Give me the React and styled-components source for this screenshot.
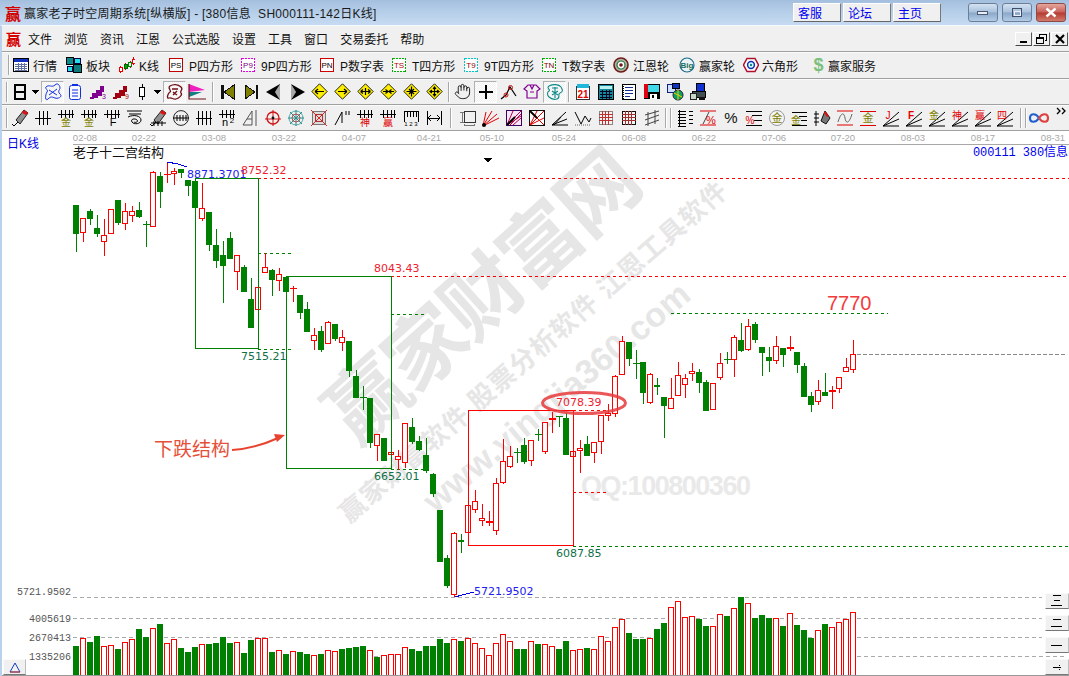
import React from 'react'
import styled, { createGlobalStyle } from 'styled-components'
import { Hand } from 'lucide-react'

const GlobalStyle = createGlobalStyle`
  html, body { margin: 0; padding: 0; background: #fff; }
  body { font-family: "Liberation Sans", "Noto Sans CJK SC", sans-serif; font-size: 12px; }
`

const CJK = '"Liberation Sans", "Noto Sans CJK SC", sans-serif'

const Window = styled.div`
  width: 1069px;
  height: 676px;
  display: flex;
  flex-direction: column;
  overflow: hidden;
  position: relative;
`

const TitleBar = styled.div`
  height: 25px;
  flex: none;
  display: flex;
  align-items: center;
  padding-left: 5px;
  background: linear-gradient(#a4bfde, #b8d0ea 55%, #c6dbf2);
  color: #1a1a1a;
`

const Logo = styled.span`
  font: bold ${p => p.$size || 16}px "Noto Sans CJK SC", sans-serif;
  color: #d40000;
  width: 15px;
  line-height: 16px;
  flex: none;
`

const TitleText = styled.span`
  margin-left: 4px;
  letter-spacing: 0.26px;
  white-space: pre;
`

const LinkGroup = styled.div`
  margin-left: auto;
  display: flex;
  gap: 2px;
  margin-right: 27px;
`

const LinkButton = styled.button`
  width: 48px;
  height: 19px;
  padding: 0 0 0 4px;
  text-align: left;
  background: #f0f0f0;
  color: #0000f0;
  font: 12px ${CJK};
  border: 1px solid;
  border-color: #fff #777 #666 #fff;
`

const WinButtons = styled.div`
  display: flex;
  gap: 4px;
  margin-right: 3px;
`

const WinButton = styled.div`
  width: 30px;
  height: 19px;
  box-sizing: border-box;
  border: 1px solid ${p => (p.$close ? '#8f4a46' : '#6d7f96')};
  border-radius: 3px;
  display: flex;
  align-items: center;
  justify-content: center;
  background: ${p => (p.$close
    ? 'linear-gradient(#e4a79d, #c8605a 48%, #b53a30 52%, #d17a6c)'
    : 'linear-gradient(#d3e2f2, #a9c1dc 48%, #8aa7c9 52%, #b4cce6)')};
`

const Body = styled.div`
  flex: 1;
  min-height: 0;
  display: flex;
  flex-direction: column;
  border-left: 2px solid #b9d1ea;
  border-top: 1px solid #f6fafe;
  background: #f0f0f0;
`

const MenuBar = styled.div`
  height: 26px;
  box-sizing: border-box;
  flex: none;
  display: flex;
  align-items: center;
  padding-left: 4px;
  border-bottom: 1px solid #a0a0a0;
`

const MenuItems = styled.div`
  display: flex;
  gap: 12px;
  margin-left: 7px;
  color: #111;
`

const MdiButtons = styled.div`
  margin-left: auto;
  display: flex;
  gap: 1px;
  margin-right: 1px;
`

const MdiButton = styled.div`
  width: 17px;
  height: 14px;
  box-sizing: border-box;
  background: #f0f0f0;
  border: 1px solid;
  border-color: #fff #555 #444 #fff;
  display: flex;
  align-items: center;
  justify-content: center;
`

const ToolRow = styled.div`
  height: ${p => p.$h || 26}px;
  box-sizing: border-box;
  flex: none;
  display: flex;
  align-items: center;
  border-bottom: 1px solid #a0a0a0;
  box-shadow: inset 0 1px 0 #fbfbfb;
  padding-left: ${p => p.$pad || 0}px;
  color: #111;
`

const Grip = styled.i`
  display: block;
  flex: none;
  width: 1px;
  height: 20px;
  margin: ${p => p.$m || '0 3px 0 3px'};
  background: #a8a8a8;
  border-right: 1px solid #fff;
`

const Named = styled.div`
  width: ${p => p.$w}px;
  flex: none;
  display: flex;
  align-items: center;
  gap: ${p => p.$gap || 4}px;
  white-space: nowrap;
`

const Slot = styled.span`
  width: ${p => p.$w || 23}px;
  height: 22px;
  flex: none;
  display: flex;
  align-items: ${p => (p.$top ? 'flex-start' : 'center')};
  justify-content: center;
  box-sizing: border-box;
  ${p => p.$on && `
    border: 1px solid;
    border-color: #b0b0b0 #fff #fff #b0b0b0;
    background: repeating-conic-gradient(#fff 0 25%, #f0f0f0 0 50%) 0 0 / 2px 2px;
  `}
`

const Pic = styled.svg`
  display: block;
  flex: none;
`

const ChartPanel = styled.div`
  flex: 1;
  min-height: 0;
  background: #fff;
  position: relative;
`

const ChartSvg = styled.svg`
  display: block;
  overflow: visible;
  shape-rendering: crispEdges;
  width: 1067px;
  height: 545px;
`

const SideButton = styled.div`
  position: absolute;
  left: ${p => p.$x - 2}px;
  top: ${p => p.$y - 131}px;
  width: ${p => p.$w || 23}px;
  height: 16px;
  box-sizing: border-box;
  background: #f0f0f0;
  border: 1px solid;
  border-color: #fafafa #bdbdbd #777 #fafafa;
  display: flex;
  align-items: center;
  justify-content: center;
`

const Stroke = ({ d, c = '#000', w = 1, f = 'none' }) => <path d={d} stroke={c} strokeWidth={w} fill={f} />
const Cap = ({ x, y, s = 8, c = '#000', b, children }) => (
  <text x={x} y={y} fontSize={s} fill={c} fontWeight={b ? 'bold' : 'normal'} textAnchor="middle" fontFamily={'"Liberation Sans", "Noto Sans CJK SC", sans-serif'}>{children}</text>
)
const Ico = ({ w = 18, h = 18, crisp = true, children }) => (
  <Pic width={w} height={h} viewBox={`0 0 ${w} ${h}`} shapeRendering={crisp ? 'crispEdges' : 'geometricPrecision'}>{children}</Pic>
)

const Tag = ({ border, dash, text, fg = '#000' }) => (
  <Ico w={14} h={14}>
    <rect x=".5" y=".5" width="13" height="13" fill="#fff" stroke={border} strokeDasharray={dash} />
    <Cap x={7} y={10} s={8} c={fg}>{text}</Cap>
  </Ico>
)

const row1 = [
  { w: 53, label: '行情', icon: (
    <Ico w={16} h={15}>
      <rect x=".5" y=".5" width="15" height="13" fill="#fff" stroke="#000" />
      <rect x="1" y="1" width="14" height="3" fill="#1030c0" />
      <Stroke d="M2 6H14M2 8H14M2 10H14M2 12H14M5 5V13M8 5V13M11 5V13" c="#6070a0" />
      <Stroke d="M1 15H16" c="#888" />
    </Ico>
  ) },
  { w: 52, label: '板块', icon: (
    <Ico w={16} h={16}>
      <rect x=".5" y=".5" width="7" height="7" fill="#0a8a8a" stroke="#000" />
      <rect x="8.5" y="1.5" width="6" height="5" fill="#20e0e8" stroke="#004" />
      <rect x="1.5" y="9.5" width="5" height="5" fill="#20e0e8" stroke="#004" />
      <rect x="7.5" y="7.5" width="8" height="8" fill="#0a7a7a" stroke="#000" />
    </Ico>
  ) },
  { w: 51, label: 'K线', icon: (
    <Ico w={17} h={16}>
      <Stroke d="M2.5 9V16M7.5 6V13M12.5 4V11M15.5 0V8" c="#d00" />
      <rect x="1" y="10" width="3" height="4" fill="#fff" stroke="#e00" />
      <rect x="6" y="7" width="3" height="4" fill="#0a0" stroke="#060" />
      <rect x="10" y="5" width="3" height="4" fill="#fff" stroke="#080" />
      <rect x="14" y="2" width="3" height="4" fill="#fff" stroke="#e00" />
    </Ico>
  ) },
  { w: 72, label: 'P四方形', gap: 6, icon: <Tag border="#c00000" text="PS" /> },
  { w: 79, label: '9P四方形', gap: 6, icon: <Tag border="#e000e0" dash="2 1" text="P9" fg="#800080" /> },
  { w: 72, label: 'P数字表', gap: 6, icon: <Tag border="#d00000" text="PN" /> },
  { w: 72, label: 'T四方形', gap: 6, icon: <Tag border="#00b000" dash="2 1" text="TS" fg="#b00000" /> },
  { w: 78, label: '9T四方形', gap: 6, icon: <Tag border="#00c8c8" dash="2 1" text="T9" fg="#a00000" /> },
  { w: 71, label: 'T数字表', gap: 6, icon: <Tag border="#00b000" dash="2 1" text="TN" fg="#800000" /> },
  { w: 66, label: '江恩轮', gap: 4, icon: (
    <Ico w={16} h={16} crisp={false}>
      <circle cx="8" cy="8" r="7" fill="#a8b8a0" stroke="#701818" strokeWidth="1.6" />
      <circle cx="8" cy="8" r="4" fill="#fff" stroke="#2a7040" strokeWidth="1.2" />
      <circle cx="8" cy="8" r="1.8" fill="#701818" />
    </Ico>
  ) },
  { w: 64, label: '赢家轮', gap: 4, icon: (
    <Ico w={16} h={16} crisp={false}>
      <circle cx="8" cy="8" r="7" fill="#eaf4f8" stroke="#1a6a8a" strokeWidth="1.2" />
      <Cap x={8} y={11} s={8} c="#1a6a5a" b>Big</Cap>
    </Ico>
  ) },
  { w: 69, label: '六角形', gap: 3, icon: (
    <Ico w={16} h={16} crisp={false}>
      <polygon points="4,1.5 12,1.5 15.5,8 12,14.5 4,14.5 .5,8" fill="#fff" stroke="#b01030" strokeWidth="1.5" />
      <circle cx="8" cy="8" r="3.4" fill="#dff" stroke="#1030b0" strokeWidth="1.5" />
      <circle cx="8" cy="8" r="1.2" fill="#188" />
    </Ico>
  ) },
  { w: 70, label: '赢家服务', gap: 3, icon: (
    <Ico w={13} h={18} crisp={false}>
      <Cap x={6.5} y={15} s={18} c="#7cc07c" b>$</Cap>
    </Ico>
  ) },
]

const stepLine = (c, n) => (
  <Ico>
    <Stroke d="M1 15H4V11H6V14H8V8H10V12H12V4H14V9" c={c} w="1.4" />
    <Cap x={15} y={16} s={7} c={c}>{n}</Cap>
  </Ico>
)

const diamond = glyph => (
  <Ico w={17} h={17} crisp={false}>
    <polygon points="8.5,.8 16.2,8.5 8.5,16.2 .8,8.5" fill="#ffee00" stroke="#222" strokeWidth="1" />
    <Stroke d={glyph} w="1.2" />
  </Ico>
)

const tri = (points, fill) => <polygon points={points} fill={fill} stroke="#111" />

const row2a = [
  { w: 20, icon: <Ico><Stroke d="M4 2H14V16H4ZM4 9H14" w="2" /></Ico> },
  { w: 11, icon: <Ico w={7} h={4}><polygon points="0,0 7,0 3.5,4" fill="#000" /></Ico> },
  { on: true, icon: <Ico crisp={false}><Stroke d="M2 4C5 1 8 5 11 2S16 3 16 5 13 8 16 11 14 16 11 15 7 13 4 16 1 12 3 9 0 6 2 4ZM5 7L13 12M13 6L5 12" c="#1030e0" /></Ico> },
  { w: 22, icon: <Ico crisp={false}><rect x="3.5" y="2.5" width="11" height="14" rx="2" fill="#f8f8ff" stroke="#1030e0" /><Stroke d="M6 1.5H12M6 7H12M6 10H12M6 13H12" c="#1030e0" /></Ico> },
  { icon: stepLine('#800090', '3') },
  { icon: stepLine('#a00010', '9') },
  { w: 20, icon: <Ico><Stroke d="M9 1V17" /><rect x="6.5" y="4.5" width="5" height="9" fill="#fff" stroke="#000" strokeWidth="1.4" /></Ico> },
  { w: 11, icon: <Ico w={7} h={4}><polygon points="0,0 7,0 3.5,4" fill="#000" /></Ico> },
  { on: true, icon: <Ico crisp={false}><Stroke d="M4 3C7 1 12 1 15 4S13 8 15 10 13 15 10 16 6 14 3 15 2 10 4 9 1 5 4 3ZM6 6L12 6M7 9L11 12M11 8L7 12" c="#701018" w="1.3" /></Ico> },
  { icon: <Ico w={19} h={18} crisp={false}><polygon points="1,1 17,7 1,9" fill="#f020c0" /><polygon points="1,9 14,9 1,14" fill="#108080" /><Stroke d="M1 1V16H18" c="#701018" w="1.2" /></Ico> },
]

const row2b = [
  { icon: <Ico><rect x="2" y="2" width="2.5" height="14" fill="#111" />{tri('15,2 5,9 15,16', '#808000')}</Ico> },
  { icon: <Ico>{tri('3,2 13,9 3,16', '#808000')}<rect x="13.5" y="2" width="2.5" height="14" fill="#111" /></Ico> },
  { icon: <Ico crisp={false}><polygon points="15,1 1,9 15,9" fill="#000" /><polygon points="15,1 15,17 10,9" fill="#a8a8a8" /><polygon points="15,17 1,9 10,9" fill="#000" /></Ico> },
  { icon: <Ico crisp={false}><polygon points="3,1 3,17 8,9" fill="#a8a8a8" /><polygon points="3,1 17,9 8,9" fill="#000" /><polygon points="3,17 17,9 8,9" fill="#000" /></Ico> },
  { icon: diamond('M4 8.5H13M4 8.5L7 6M4 8.5L7 11') },
  { icon: diamond('M4 8.5H13M13 8.5L10 6M13 8.5L10 11') },
  { icon: diamond('M3.5 8.5H13.5M3.5 8.5L6 6.5M3.5 8.5L6 10.5M13.5 8.5L11 6.5M13.5 8.5L11 10.5M8.5 5V12') },
  { icon: diamond('M3 8.5H14M8 8.5L5.5 6.5M8 8.5L5.5 10.5M9 8.5L11.5 6.5M9 8.5L11.5 10.5') },
  { icon: diamond('M3.5 8.5H13.5M8.5 3.5V13.5M6 6L11 11M11 6L6 11') },
  { icon: diamond('M3.5 8.5H13.5M8.5 3.5V13.5M6 7L4 8.5L6 10M11 7L13 8.5L11 10M7 6L8.5 4L10 6M7 11L8.5 13L10 11') },
]

const row2c = [
  { icon: <Hand size={17} strokeWidth={1.3} color="#111" /> },
  { on: true, icon: <Ico><Stroke d="M9 2V16M2 9H16" w="1.2" /></Ico> },
  { icon: <Ico crisp={false}><Stroke d="M1 16L6 12L10 4L16 13" w="1.2" /><circle cx="6" cy="12" r="2" fill="none" stroke="#d01010" /><circle cx="10.5" cy="4.5" r="2" fill="none" stroke="#d01010" /></Ico> },
  { icon: <Ico crisp={false}><Stroke d="M5 2H13L17 6L14 8V15H4V8L1 6ZM7 2L9 6L11 2M7 9H11" c="#800090" w="1.2" /></Ico> },
  { on: true, icon: <Ico w={20} crisp={false}><Stroke d="M4 3C8 1 14 1 16 4S18 9 15 10 16 15 12 16 6 16 4 14 2 9 4 8 1 5 4 3ZM7 5H13M7 8L13 12M13 8L7 12M10 4V15" c="#0a8888" w="1.1" /></Ico> },
]

const row2d = [
  { icon: <Ico><rect x="2.5" y="3.5" width="13" height="13" fill="#fff" stroke="#333" /><rect x="3" y="1" width="12" height="4" fill="#20b8d8" /><Cap x={9} y={15} s={10} c="#e00000" b>21</Cap></Ico> },
  { icon: <Ico><rect x="1.5" y="1.5" width="15" height="15" fill="#108a9a" stroke="#000" /><rect x="3" y="3" width="12" height="3" fill="#b8f0f0" /><Stroke d="M3 8.5H15M3 11.5H15M3 14.5H15M5.5 7V16M9 7V16M12.5 7V16" c="#002" /></Ico> },
  { icon: <Ico><rect x="2.5" y="1.5" width="13" height="15" fill="#fff" stroke="#000" /><Stroke d="M5 4H13M5 7H13M5 10H13M5 13H10" c="#183090" /><path d="M3 1V17" stroke="#000" strokeWidth="2" strokeDasharray="1 1" /></Ico> },
  { icon: <Ico><rect x="1" y="1" width="16" height="15" fill="#000" /><rect x="1" y="1" width="4" height="14" fill="#e00010" /><rect x="5" y="2" width="11" height="7" fill="#40d8e8" /><rect x="7" y="11" width="7" height="5" fill="#fff" /><rect x="9" y="12" width="2" height="3" fill="#000" /></Ico> },
  { icon: <Ico crisp={false}><rect x="1.5" y="1.5" width="8" height="8" fill="#d0e0ff" stroke="#102080" /><rect x="6.5" y="0.5" width="7" height="5" fill="#1030c0" stroke="#000" /><circle cx="12" cy="12" r="5" fill="#10a060" stroke="#223" /><Stroke d="M8 10L16 14M12 7V17" c="#f0d000" /></Ico> },
  { icon: <Ico><rect x="7.5" y=".5" width="8" height="8" fill="#1030d0" stroke="#000" /><rect x="3" y="8" width="13" height="6" fill="#405050" stroke="#000" /><rect x="1.5" y="10.5" width="6" height="6" fill="#c8d8c8" stroke="#222" /><rect x="10" y="14" width="6" height="3" fill="#111" /></Ico> },
]

const comb = (c = '#000') => <Stroke d="M1 5H17M4 1V9M8 1V9M12 1V9M15 1V9" c={c} />
const Comb = (c, glyph, gc) => <Ico>{comb(c)}<Cap x={9} y={17} s={10} c={gc || c}>{glyph}</Cap></Ico>
const fan = (glyph, gc, b) => (
  <Ico crisp={false}>
    <Stroke d="M1 17H17M1 17L17 10M1 17L17 3" w="1" />
    <Cap x={6} y={10} s={10} c={gc} b={b}>{glyph}</Cap>
  </Ico>
)
const pencil = (
  <>
    <polygon points="13,1 17,4 9,15 5,11" fill="#909090" stroke="#222" />
    <polygon points="13,1 17,4 15,6 11,4" fill="#e01010" />
    <Stroke d="M7 13L3 17M3 17L1 15" w="1" />
  </>
)
const grid = (c, ol) => (
  <Ico>
    <rect x="2.5" y="2.5" width="13" height="13" fill="#f4f4f4" stroke={ol} />
    <Stroke d="M5.5 2V16M8.5 2V16M11.5 2V16M2 5.5H16M2 8.5H16M2 11.5H16" c={c} />
  </Ico>
)

const row3a = [
  <Ico crisp={false}>{pencil}</Ico>,
  <Ico><Stroke d="M1 9H17M5 2V16M9 2V16M13 2V16" /></Ico>,
  Comb('#000', '金', '#808000'),
  Comb('#000', '金', '#808000'),
  <Ico>{comb()}<Cap x={10} y={17} s={11}>F</Cap></Ico>,
  <Ico crisp={false}><Stroke d="M1 2H16M3 5H15M2 8C8 5 15 7 15 11S8 16 6 13 9 9 11 11 9 14 8 13" /></Ico>,
  <Ico crisp={false}>{pencil}<Stroke d="M2 14H17M5 12V17M9 12V17M13 12V17" /></Ico>,
  <Ico crisp={false}><circle cx="9" cy="9" r="7.4" fill="none" stroke="#222" /><Stroke d="M1 9H17M5 6V12M8 6V12M11 6V12M14 6V12" /></Ico>,
  <Ico><Stroke d="M1 9H17M3 2V16M7 2V16M11 2V16M15 2V16" /></Ico>,
  <Ico>{comb()}<Cap x={7} y={17} s={11}>n</Cap><Cap x={14} y={14} s={8}>2</Cap></Ico>,
  <Ico crisp={false}><Stroke d="M2 16L11 2V16ZM6 10L11 10M15 1V17" c="#555" /></Ico>,
  <Ico crisp={false}><circle cx="9" cy="9" r="6" fill="none" stroke="#d01010" strokeWidth="1.3" /><Stroke d="M9 1V17M1 10H17" c="#d01010" /><circle cx="9" cy="9" r="1.4" fill="#111" /></Ico>,
  <Ico crisp={false}><circle cx="9" cy="9" r="7" fill="none" stroke="#4aa" /><circle cx="9" cy="9" r="4" fill="none" stroke="#c44" /><Stroke d="M1 9H17M9 1V17M3 3L15 15M15 3L3 15" c="#388" /></Ico>,
  <Ico crisp={false}><rect x="2.5" y="2.5" width="13" height="13" fill="#ddd" stroke="#777" /><rect x="5.5" y="5.5" width="7" height="7" fill="none" stroke="#a33" /><Stroke d="M1 1L17 17M17 1L1 17" c="#d22" /></Ico>,
  <Ico crisp={false}><Stroke d="M2 16L9 3M9 14V3M13 6V2M16 6V2" /></Ico>,
  Comb('#000', '神', '#e00000'),
  Comb('#000', '赢', '#e00000'),
  <Ico><Stroke d="M2 2H16V13M2 2V13M5 2V8M8 2V8M11 2V8M14 2V8" /><Cap x={9} y={17} s={6}>1 2 3</Cap></Ico>,
  <Ico><Stroke d="M2 2V16M16 2V16M3 9H15M3 9L6 6M3 9L6 12M15 9L12 6M15 9L12 12" /></Ico>,
]

const row3b = [
  <Ico><rect x="5.5" y="2.5" width="11" height="11" fill="none" stroke="#333" /><Stroke d="M1 3H5M1 13H5M3 3V13M5 15V17M15 15V17M5 16H15" c="#777" /></Ico>,
  <Ico crisp={false}><Stroke d="M1 17L17 9M1 17L15 5M1 17L10 2M1 17L4 3" c="#e00000" /><circle cx="2" cy="16" r="2" fill="#000" /></Ico>,
  <Ico crisp={false}><rect x="1.5" y="1.5" width="15" height="15" fill="#f4e8f8" stroke="#400060" /><Stroke d="M2 16L16 7M2 16L16 2M2 16L8 2M5 16L16 5M8 16L16 9" c="#c00040" /><Stroke d="M2 16L10 8" c="#000" w="2" /></Ico>,
  <Ico crisp={false}><rect x="1.5" y="1.5" width="15" height="15" fill="#fff" stroke="#111" /><Stroke d="M2 16L16 2M2 2L16 16M9 2L2 16M16 9L2 16" c="#e00000" /><Stroke d="M2 2L9 9" c="#000" w="2" /></Ico>,
  <Ico crisp={false}><Stroke d="M1 16H17M1 16L16 10M1 16L15 3M3 16L10 8" /></Ico>,
  <Ico crisp={false}><Stroke d="M1 3L7 15L11 7L15 13L17 9" /><path d="M1 16H17" stroke="#666" strokeDasharray="1 1" /></Ico>,
  grid('#c03030', '#888'),
  grid('#a03030', '#111'),
  <Ico crisp={false}><Stroke d="M2 6L16 2M2 11L16 6M2 16L16 11M5 17V3M12 15V1" c="#444" /></Ico>,
]

const row3c = [
  <Ico><Stroke d="M2 2H10M2 5H10M2 8H10M2 11H10M2 14H10M2 17H10M3 1V17" /><Stroke d="M13 2H17M13 6H17M13 10H17M13 14H17" /></Ico>,
  <Ico crisp={false}><Stroke d="M1 2H17M1 16H17" c="#e00000" /><Stroke d="M4 15L10 3" c="#444" /><Cap x={12} y={15} s={11} c="#e00000">%</Cap></Ico>,
  <Ico><Cap x={9} y={14} s={15} c="#111">%</Cap></Ico>,
  <Ico><Stroke d="M1 2H17M7 6H17M9 11H17M1 16H17" /><Cap x={5} y={15} s={10} c="#e00000">%</Cap></Ico>,
  <Ico crisp={false}><circle cx="9" cy="9" r="7.5" fill="#f4f4f4" stroke="#999" /><Cap x={9} y={13} s={11} c="#808000">金</Cap></Ico>,
  <Ico><Stroke d="M2 3H17M9 7H17M11 11H17M2 16H17" /><Cap x={6} y={15} s={10} c="#808000">金</Cap></Ico>,
  <Ico crisp={false}><Stroke d="M3 2V17M1 5H6M1 9H6M1 13H6" /><polygon points="12,2 17,9 13,15 8,12" fill="#777" stroke="#111" /><polygon points="12,2 16,7 14,8 11,4" fill="#e01010" /></Ico>,
  <Ico crisp={false}><Stroke d="M1 2H17M1 16H17" c="#e00000" /><Stroke d="M2 13C5 3 8 3 9 9S13 15 16 5" c="#666" /></Ico>,
  <Ico><Stroke d="M1 2H17M1 16H17" c="#e00000" /><Cap x={9} y={13} s={11} c="#808000">金</Cap></Ico>,
  fan('J', '#e00000'),
  fan('F', '#e00000', true),
  fan('金', '#808000'),
  fan('神', '#e00000'),
  fan('赢', '#e00000'),
  fan('四', '#e00000'),
]

const Tools = ({ items }) => items.map((it, i) => (
  <Slot key={i} $w={it.w} $on={it.on}>{it.icon}</Slot>
))
const ToolsPlain = ({ items, w = 23 }) => items.map((el, i) => (
  <Slot key={i} $w={w}>{el}</Slot>
))

// [colour, body top, body bottom, high, low] from x=76, one every 7px
const candles = [
  ['g', 205, 234, 205, 252], ['r', 218, 232, 218, 242], ['g', 211, 219, 209, 225], ['g', 228, 234, 215, 237],
  ['r', 235, 241, 219, 256], ['r', 209, 233, 209, 233], ['g', 200, 223, 200, 225], ['r', 211, 223, 203, 230],
  ['r', 211, 215, 206, 222], ['g', 210, 217, 202, 218], ['g', 224, 224, 221, 247], ['r', 172, 226, 171, 227],
  ['g', 176, 192, 172, 208], ['r', 174, 174, 162, 183], ['r', 171, 173, 168, 185], ['g', 169, 173, 169, 178],
  ['g', 180, 186, 180, 196], ['g', 181, 208, 181, 208], ['r', 208, 218, 183, 221], ['g', 212, 245, 212, 251],
  ['g', 245, 261, 229, 268], ['g', 255, 266, 241, 303], ['g', 238, 259, 232, 259], ['r', 255, 271, 255, 290],
  ['g', 267, 292, 265, 292], ['g', 299, 328, 278, 328], ['r', 287, 309, 287, 348], ['r', 267, 272, 253, 273],
  ['g', 270, 280, 269, 296], ['r', 274, 280, 268, 291], ['g', 277, 292, 276, 292], ['r', 288, 288, 286, 302],
  ['g', 295, 313, 295, 319], ['g', 309, 332, 302, 332], ['r', 335, 340, 328, 350], ['g', 331, 350, 326, 352],
  ['r', 322, 343, 321, 344], ['g', 324, 339, 324, 341], ['r', 337, 342, 330, 351], ['g', 341, 371, 341, 377],
  ['g', 376, 398, 370, 398], ['g', 397, 397, 386, 410], ['g', 398, 443, 398, 448], ['r', 434, 445, 434, 461],
  ['g', 438, 461, 438, 461], ['r', 452, 454, 443, 468], ['r', 456, 459, 450, 470], ['r', 423, 462, 423, 468],
  ['g', 427, 442, 418, 444], ['g', 441, 450, 436, 451], ['g', 455, 471, 438, 473], ['g', 474, 494, 473, 497],
  ['g', 510, 562, 510, 562], ['g', 558, 586, 555, 588], ['r', 533, 594, 532, 597], ['g', 540, 542, 534, 553],
  ['r', 505, 532, 505, 532], ['r', 501, 509, 490, 513], ['r', 518, 520, 504, 526], ['r', 521, 522, 511, 526],
  ['r', 483, 530, 478, 535], ['r', 461, 482, 439, 484], ['r', 456, 466, 446, 468], ['g', 452, 452, 448, 463],
  ['g', 445, 462, 438, 464], ['r', 440, 460, 440, 466], ['g', 434, 434, 429, 441], ['r', 422, 451, 422, 454],
  ['r', 418, 419, 412, 433], ['g', 416, 416, 416, 427], ['g', 418, 455, 413, 455], ['r', 451, 456, 451, 456],
  ['r', 448, 450, 440, 473], ['g', 444, 456, 436, 456], ['r', 442, 452, 442, 463], ['r', 415, 441, 415, 454],
  ['r', 413, 415, 404, 421], ['r', 376, 413, 375, 417], ['r', 341, 374, 336, 375], ['g', 342, 359, 342, 366],
  ['g', 363, 363, 350, 379], ['g', 362, 393, 362, 404], ['r', 374, 402, 373, 404], ['g', 385, 387, 378, 395],
  ['g', 397, 406, 397, 438], ['r', 398, 408, 378, 409], ['r', 375, 395, 362, 395], ['r', 378, 384, 374, 398],
  ['r', 371, 373, 363, 381], ['g', 372, 383, 369, 393], ['g', 382, 411, 380, 411], ['r', 383, 409, 383, 409],
  ['r', 363, 377, 353, 380], ['g', 359, 359, 352, 364], ['r', 337, 359, 335, 377], ['g', 340, 351, 323, 352],
  ['r', 326, 349, 319, 351], ['g', 324, 340, 322, 343], ['g', 347, 353, 347, 376], ['g', 357, 361, 347, 372],
  ['r', 346, 360, 336, 364], ['g', 348, 355, 348, 367], ['r', 347, 348, 336, 351], ['g', 352, 365, 352, 373],
  ['g', 366, 397, 363, 397], ['g', 396, 405, 392, 412], ['r', 390, 401, 380, 405], ['g', 392, 396, 373, 396],
  ['r', 390, 391, 386, 409], ['r', 377, 388, 377, 393], ['r', 367, 371, 358, 372], ['r', 354, 369, 340, 373],
]

// top of each volume bar, same x as the candles. negative = green
const volumes = [
  -646, 638, -642, -636, 646, 645, -649, 642, 639, -629, -637, 628, -624, 643, 639, -648,
  -652, -647, 644, -644, -643, -637, -643, 642, -653, -640, 638, 638, -652, 650, -654, 651,
  -652, -654, 655, -654, 650, 651, -649, -648, -647, -646, 650, -657, 655, 654, 654,
  647, -649, -651, -646, -646, -639, -643, 639, -641, 638, 643, 648, 655, 643, 634, 641,
  -649, -649, 641, -644, 644, 646, -649, -641, 650, 649, -648, 649, 636, 641, 627, 619,
  -633, -639, -639, 638, -629, -623, 607, 601, 617, 616, -619, -626, 626, 614, -616, 608,
  -597, 603, -618, -615, -618, 618, -626, 613, -625, -630, -638, 630, -624, 627, 622, 619, 612,
]

const GREEN = '#008000'
const RED = '#ff0000'

const Candle = ({ x, data }) => {
  const [k, top, bot, hi, lo] = data
  const col = k === 'g' ? GREEN : RED
  const h = bot - top
  return (
    <g>
      <rect x={x} y={hi} width="1" height={lo - hi} fill={col} />
      {h <= 1 ? (
        <rect x={x - 3} y={top} width="7" height={h + 1} fill={col} />
      ) : k === 'g' ? (
        <rect x={x - 3} y={top} width="6" height={h} fill={col} />
      ) : (
        <rect x={x - 2.5} y={top + 0.5} width="5" height={h} fill="#fff" stroke={col} />
      )}
    </g>
  )
}

const VolBar = ({ x, top }) => {
  const y = Math.abs(top)
  return top < 0
    ? <rect x={x - 3} y={y} width="6" height={675 - y} fill={GREEN} />
    : <rect x={x - 2.5} y={y + 0.5} width="5" height={675 - y} fill="#fff" stroke={RED} />
}

const Dash = ({ y, x1, x2, c, d = '3 3' }) => (
  <line x1={x1} x2={x2} y1={y + 0.5} y2={y + 0.5} stroke={c} strokeDasharray={d} />
)

const Box = ({ x, y, w, h, c }) => <rect x={x + 0.5} y={y + 0.5} width={w} height={h} fill="none" stroke={c} />

const dates = [
  ['02-08', 85], ['02-22', 144], ['03-08', 214], ['03-22', 284], ['04-07', 354], ['04-21', 429], ['05-10', 492],
  ['05-24', 564], ['06-08', 634], ['06-22', 704], ['07-06', 774], ['07-20', 843], ['08-03', 913], ['08-17', 983], ['08-31', 1053],
]

const Price = ({ x, y, c, children }) => (
  <text x={x} y={y + 4} fontSize="11" fill={c} fontFamily='"DejaVu Sans", sans-serif'>{children}</text>
)

const Axis = ({ y, children }) => (
  <text x="71" y={y + 3.5} textAnchor="end" fontSize="10" fill="#555" fontFamily='"Liberation Mono", monospace'>{children}</text>
)

const Mark = ({ x, y, s = 78, w, len, rot = -42, children, c = '#e6e6e6' }) => (
  <text
    x={x} y={y} transform={`rotate(${rot} ${x} ${y})`} textAnchor="middle" fontSize={s} fontWeight={w || 'bold'} fill={c}
    fontFamily={'"Liberation Sans", "Noto Sans CJK SC", sans-serif'} textLength={len} lengthAdjust="spacing"
  >{children}</text>
)

const Chart = () => (
  <ChartSvg viewBox="2 131 1067 545">
    <Mark x={502} y={317} s={80} len={390}>赢家财富网</Mark>
    <Mark x={539} y={359} s={26} len={503} rot={-41}>赢家财富软件 股票分析软件 江恩工具软件</Mark>
    <Mark x={564} y={406} s={34} len={336} rot={-40}>www.yingjia360.com</Mark>
    <text x="581" y="495" fontSize="27" fontWeight="bold" fill="#e9e9e9" fontFamily='"Liberation Sans", sans-serif' textLength="170">QQ:100800360</text>

    {dates.map(([t, x]) => (
      <text key={t} x={x} y="141" textAnchor="middle" fontSize="9.5" fill="#a8a8a8" fontFamily='"Liberation Sans", sans-serif'>{t}</text>
    ))}
    <rect x="73" y="144" width="996" height="1" fill="#a8a8a8" />
    <text x="7" y="148" fontSize="12" fill="#0000e0" fontFamily={CJK}>日K线</text>
    <text x="73" y="157" fontSize="13" fill="#111" fontFamily={CJK}>老子十二宫结构</text>
    <text x="973" y="156" fontSize="12" fill="#0000f0" fontFamily={'"Liberation Mono", "Noto Sans CJK SC", monospace'} textLength="95">000111 380信息</text>
    <polygon points="484,158 492,158 488,163" fill="#000" />

    {[597, 618, 637, 656].map((y, i) => (
      <Dash key={y} y={y} x1={73} x2={i === 3 ? 1066 : 1042} c="#aaa" d="4 3" />
    ))}
    <Dash y={354} x1={857} x2={1066} c="#888" d="4 2" />
    <Axis y={591}>5721.9502</Axis>
    <Axis y={618}>4005619</Axis>
    <Axis y={637}>2670413</Axis>
    <Axis y={656}>1335206</Axis>

    <Dash y={178} x1={258} x2={1069} c={RED} />
    <Dash y={276} x1={391} x2={1069} c={RED} />
    <Dash y={253} x1={258} x2={292} c={GREEN} />
    <Dash y={349} x1={258} x2={292} c={GREEN} />
    <Dash y={314} x1={391} x2={425} c={GREEN} />
    <Dash y={469} x1={391} x2={425} c={GREEN} />
    <Dash y={313} x1={671} x2={888} c={GREEN} />
    <Dash y={546} x1={573} x2={1069} c={GREEN} />
    <Dash y={410} x1={573} x2={607} c={RED} />
    <Dash y={492} x1={573} x2={607} c={RED} />

    {candles.map((c, i) => <Candle key={i} x={76 + i * 7} data={c} />)}
    {volumes.map((t, i) => <VolBar key={i} x={76 + i * 7} top={t} />)}
    <rect x="2" y="675" width="1067" height="1" fill="#999" />

    <Box x={195} y={178} w={63} h={170} c={GREEN} />
    <Box x={286} y={276} w={105} h={192} c={GREEN} />
    <Box x={468} y={410} w={105} h={135} c={RED} />

    <polyline points="167,162 178,164 187,167" fill="none" stroke="#0000e0" />
    <polyline points="455,597 462,595 474,592" fill="none" stroke="#0000e0" />
    <Price x={187} y={174} c="#2020f0">8871.3701</Price>
    <Price x={241} y={170} c="#f02030">8752.32</Price>
    <Price x={241} y={356} c="#107048">7515.21</Price>
    <Price x={374} y={268} c="#f02030">8043.43</Price>
    <Price x={374} y={476} c="#107048">6652.01</Price>
    <Price x={556} y={402} c="#f02030">7078.39</Price>
    <Price x={556} y={553} c="#107048">6087.85</Price>
    <Price x={474} y={591} c="#2020f0">5721.9502</Price>

    <ellipse cx="584" cy="403" rx="41.5" ry="10.5" fill="none" stroke="#e8383c" strokeWidth="3" opacity=".85" shapeRendering="geometricPrecision" />

    <text x="827" y="310" fontSize="20" fill="#f23c3c" fontFamily='"Liberation Sans", sans-serif'>7770</text>
    <text x="154" y="456" fontSize="19" fill="#e5503a" fontFamily={CJK}>下跌结构</text>
    <g shapeRendering="geometricPrecision">
      <path d="M232 450C250 449 265 444 278 438" fill="none" stroke="#e8432f" strokeWidth="2" />
      <polygon points="285,435 274,434 277,442" fill="#e8432f" />
    </g>
  </ChartSvg>
)

const lines = (...rows) => (
  <Ico w={16} h={12}>
    {rows.map(([x, y, w], i) => <rect key={i} x={x} y={y} width={w} height="1" fill="#000" />)}
  </Ico>
)

export default function App() {
  return (
    <>
      <GlobalStyle />
      <Window>
        <TitleBar>
          <Logo>赢</Logo>
          <TitleText>赢家老子时空周期系统[纵横版] - [380信息  SH000111-142日K线]</TitleText>
          <LinkGroup>
            <LinkButton>客服</LinkButton>
            <LinkButton>论坛</LinkButton>
            <LinkButton>主页</LinkButton>
          </LinkGroup>
          <WinButtons>
            <WinButton>
              <Ico w={12} h={6}><rect x=".5" y="1.5" width="10" height="3" fill="#e8eef6" stroke="#4a5a70" /></Ico>
            </WinButton>
            <WinButton>
              <Ico w={12} h={10}><rect x="1.5" y=".5" width="9" height="8" fill="none" stroke="#3f4f66" /><rect x="3" y="3" width="6" height="4" fill="none" stroke="#eef" /></Ico>
            </WinButton>
            <WinButton $close>
              <Ico w={14} h={11} crisp={false}><Stroke d="M2.5 1.5L11.5 9.5M11.5 1.5L2.5 9.5" c="#fff" w="2.4" /></Ico>
            </WinButton>
          </WinButtons>
        </TitleBar>
        <Body>
          <MenuBar>
            <Logo $size={15}>赢</Logo>
            <MenuItems>
              {['文件', '浏览', '资讯', '江恩', '公式选股', '设置', '工具', '窗口', '交易委托', '帮助'].map(m => (
                <span key={m}>{m}</span>
              ))}
            </MenuItems>
            <MdiButtons>
              <MdiButton><Ico w={9} h={9}><rect x="1" y="7" width="7" height="2" fill="#000" /></Ico></MdiButton>
              <MdiButton><Ico w={11} h={10}><Stroke d="M3.5 2.5V.5H10.5V6.5H8.5M.5 3.5H7.5V9.5H.5Z" /><rect x="0" y="3" width="8" height="2" fill="#000" /></Ico></MdiButton>
              <MdiButton><Ico w={10} h={10} crisp={false}><Stroke d="M1 1L9 9M9 1L1 9" w="2.2" /></Ico></MdiButton>
            </MdiButtons>
          </MenuBar>
          <ToolRow $h={27} $pad={3}>
            <Grip />
            {row1.map(it => (
              <Named key={it.label} $w={it.w} $gap={it.gap}>
                {it.icon}
                <span>{it.label}</span>
              </Named>
            ))}
          </ToolRow>
          <ToolRow $pad={1}>
            <Grip $m="0 2px 0 3px" />
            <Tools items={row2a} />
            <Grip $m="0 2px 0 3px" />
            <Tools items={row2b} />
            <Grip $m="0 1px 0 2px" />
            <Tools items={row2c} />
            <Grip $m="0 1px 0 2px" />
            <Tools items={row2d} />
          </ToolRow>
          <ToolRow $pad={1}>
            <Grip $m="0 .5px 0 3px" />
            <ToolsPlain items={row3a} />
            <Grip $m="0 4.5px" />
            <ToolsPlain items={row3b} />
            <Grip $m="0 2px 0 1.5px" />
            <Grip $m="0 1.5px 0 1px" />
            <ToolsPlain items={row3c} w={22.9} />
            <Grip $m="0 3px 0 3px" />
            <Grip $m="0 .5px 0 0" />
            <Slot>
              <Ico w={22} h={14} crisp={false}>
                <Stroke d="M11 7C8 2 2 2 2 7S8 12 11 7" c="#2060d0" w="2.2" />
                <Stroke d="M11 7C14 12 20 12 20 7S14 2 11 7" c="#e04040" w="2.2" />
              </Ico>
            </Slot>
            <Slot $w={21} $top>
              <Ico w={10} h={10} crisp={false}><Stroke d="M1 1L4 4L1 7M6 1L9 4L6 7" w="1.3" /></Ico>
            </Slot>
          </ToolRow>
          <ChartPanel>
            <Chart />
            <SideButton $x={3} $y={659}>
              <Ico w={12} h={11} crisp={false}><polygon points="6,1 11,10 1,10" fill="none" stroke="#1040c0" /><Stroke d="M1 10H11" c="#d03020" /></Ico>
            </SideButton>
            <SideButton $x={1045} $y={593} $w={24}>{lines([4, 0, 8], [5, 5, 6], [2, 10, 11])}</SideButton>
            <SideButton $x={1045} $y={615} $w={24}>{lines([4, 2, 8], [2, 9, 11])}</SideButton>
            <SideButton $x={1045} $y={637} $w={24}>{lines([2, 6, 11])}</SideButton>
            <SideButton $x={1045} $y={659} $w={24}>{lines([4, 6, 8], [10, 4, 1], [10, 8, 1])}</SideButton>
          </ChartPanel>
        </Body>
      </Window>
    </>
  )
}
